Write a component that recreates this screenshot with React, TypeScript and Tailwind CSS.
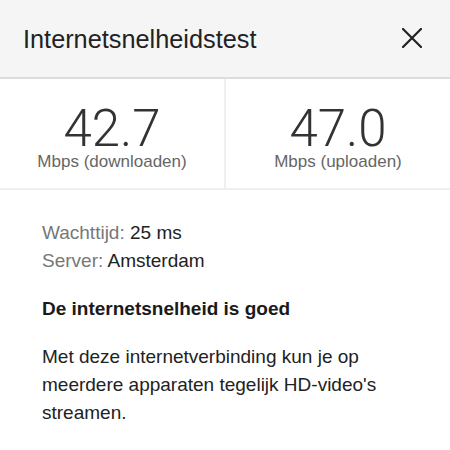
import React from "react";

export default function App() {
  return (
    <div className="w-[450px] h-[450px] bg-white overflow-hidden" style={{ fontFamily: '"Liberation Sans", Arial, sans-serif' }}>
      <div className="h-[79px] bg-[#f5f5f5] flex items-center justify-between pl-[23px] pr-[28px] border-b-2 border-[#dddddd]">
        <div className="text-[25.3px] text-[#222] leading-none pt-[2px]">Internetsnelheidstest</div>
        <svg width="20" height="20" viewBox="0 0 20 20" className="mt-[-2px]">
          <path d="M1 1 L19 19 M19 1 L1 19" stroke="#222" strokeWidth="2.2" strokeLinecap="square" />
        </svg>
      </div>
      <div className="flex h-[111px] border-b-2 border-[#efefef]">
        <div className="flex-1 flex flex-col items-center pt-[26px] border-r-2 border-[#efefef]">
          <div className="text-[51px] leading-[47px] text-[#333] font-light" style={{ fontFamily: 'Roboto, sans-serif' }}>42.7</div>
          <div className="text-[17px] leading-[20px] text-[#666]">Mbps (downloaden)</div>
        </div>
        <div className="flex-1 flex flex-col items-center pt-[26px]">
          <div className="text-[51px] leading-[47px] text-[#333] font-light" style={{ fontFamily: 'Roboto, sans-serif' }}>47.0</div>
          <div className="text-[17px] leading-[20px] text-[#666]">Mbps (uploaden)</div>
        </div>
      </div>
      <div className="pl-[42px] pt-[29px] text-[19px] text-[#222]">
        <div className="leading-[28px]"><span className="text-[#777]">Wachttijd:</span> 25 ms</div>
        <div className="leading-[28px]"><span className="text-[#777]">Server:</span> Amsterdam</div>
        <div className="leading-[28px] mt-[20px] font-bold text-[#1a1a1a]">De internetsnelheid is goed</div>
        <div className="leading-[28px] mt-[20px] w-[380px]">Met deze internetverbinding kun je op meerdere apparaten tegelijk HD-video's streamen.</div>
      </div>
    </div>
  );
}
